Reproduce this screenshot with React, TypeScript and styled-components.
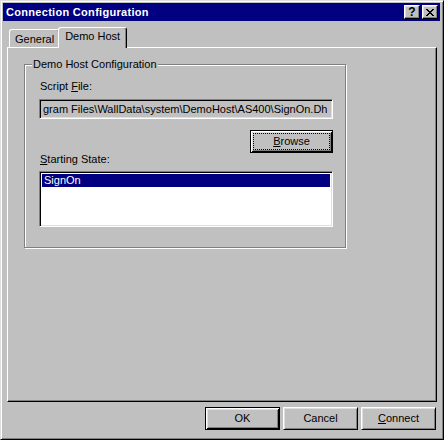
import styled, { createGlobalStyle } from "styled-components"

const GlobalStyle = createGlobalStyle`
  html, body {
    margin: 0;
    padding: 0;
    background: #c0c0c0;
  }
  * {
    box-sizing: border-box;
  }
`

const Window = styled.div`
  width: 444px;
  height: 440px;
  display: flex;
  flex-direction: column;
  background: #c0c0c0;
  border: 1px solid;
  border-color: #dfdfdf #000 #000 #dfdfdf;
  box-shadow: inset 1px 1px #fff, inset -1px -1px #808080;
  padding: 2px 3px 2px 2px;
  font-family: "Liberation Sans", Arial, sans-serif;
  font-size: 11px;
  color: #000;
`

const TitleBar = styled.div`
  height: 18px;
  display: flex;
  align-items: center;
  background: #000080;
  color: #fff;
  padding: 0 2px 0 3px;
`

const Title = styled.div`
  flex: 1;
  font-weight: bold;
  font-size: 11px;
  letter-spacing: 0.3px;
`

const TitleButtons = styled.div`
  display: flex;
  gap: 2px;
`

const TitleButton = styled.div`
  width: 16px;
  height: 14px;
  display: flex;
  align-items: center;
  justify-content: center;
  background: #c0c0c0;
  color: #000;
  font-weight: bold;
  font-size: 12px;
  border: 1px solid;
  border-color: #fff #000 #000 #fff;
  box-shadow: inset -1px -1px #808080, inset 1px 1px #dfdfdf;
`

const Body = styled.div`
  flex: 1;
  display: flex;
  flex-direction: column;
  padding: 6px 0 7px 4px;
`

const TabStrip = styled.div`
  height: 20px;
  display: flex;
  align-items: flex-end;
  padding-left: 2px;
`

const Tab = styled.div<{ $active?: boolean }>`
  position: relative;
  height: ${(p) => (p.$active ? "21px" : "18px")};
  margin: ${(p) => (p.$active ? "0 -2px -1px -2px" : "0")};
  z-index: ${(p) => (p.$active ? 1 : 0)};
  padding: ${(p) => (p.$active ? "2px 6px 0 6px" : "3px 5px 0 5px")};
  background: #c0c0c0;
  border: 1px solid;
  border-bottom: none;
  border-color: #fff #000 #000 #fff;
  border-radius: 3px 3px 0 0;
  box-shadow: inset -1px 0 #808080;
  line-height: 13px;
  white-space: nowrap;
`

const Panel = styled.div`
  flex: 1;
  margin-right: 3px;
  border: 1px solid;
  border-color: #fff #000 #000 #fff;
  box-shadow: inset -1px -1px #808080;
  padding: 16px 0 0 16px;
`

const GroupBox = styled.div`
  position: relative;
  width: 322px;
  height: 184px;
  border: 1px solid #808080;
  box-shadow: inset 1px 1px #fff, 1px 1px #fff;
  padding: 15px 12px 0 14px;
  display: flex;
  flex-direction: column;
`

const Legend = styled.span`
  position: absolute;
  top: -7px;
  left: 7px;
  padding: 0 1px;
  background: #c0c0c0;
  line-height: 13px;
`

const Label = styled.div`
  line-height: 13px;
  padding-left: 1px;
`

const TextField = styled.div`
  height: 20px;
  margin-top: 6px;
  border: 1px solid;
  border-color: #808080 #fff #fff #808080;
  box-shadow: inset 1px 1px #000, inset -1px -1px #dfdfdf;
  padding: 3px 0 0 3px;
  line-height: 13px;
  white-space: nowrap;
  overflow: hidden;
`

const ButtonRow = styled.div<{ $gap?: number }>`
  display: flex;
  justify-content: flex-end;
  gap: ${(p) => p.$gap ?? 0}px;
`

const Button = styled.div<{ $default?: boolean; $width?: number }>`
  width: ${(p) => p.$width ?? 75}px;
  height: 23px;
  display: flex;
  align-items: center;
  justify-content: center;
  background: #c0c0c0;
  border: 1px solid;
  border-color: ${(p) => (p.$default ? "#000" : "#fff #000 #000 #fff")};
  box-shadow: ${(p) =>
    p.$default
      ? "inset 1px 1px #fff, inset -1px -1px #000, inset 2px 2px #dfdfdf, inset -2px -2px #808080"
      : "inset 1px 1px #dfdfdf, inset -1px -1px #808080"};
  line-height: 13px;
`

const FocusRing = styled.span`
  flex: 1;
  align-self: stretch;
  margin: 3px;
  outline: 1px dotted #000;
  display: flex;
  align-items: center;
  justify-content: center;
`

const BrowseRow = styled(ButtonRow)`
  margin-top: 11px;
`

const ListBox = styled.div`
  height: 56px;
  margin-top: 5px;
  background: #fff;
  border: 1px solid;
  border-color: #808080 #fff #fff #808080;
  box-shadow: inset 1px 1px #000, inset -1px -1px #dfdfdf;
  padding: 2px 2px 0 2px;
`

const ListItem = styled.div<{ $selected?: boolean }>`
  height: 13px;
  line-height: 13px;
  padding-left: 2px;
  background: ${(p) => (p.$selected ? "#000080" : "transparent")};
  color: ${(p) => (p.$selected ? "#fff" : "#000")};
`

const Footer = styled(ButtonRow)`
  margin-top: 5px;
  padding-right: 4px;
`

const U = styled.u`
  text-decoration-thickness: 1px;
  text-underline-offset: 1px;
`

function CloseGlyph() {
  return (
    <svg width="8" height="7" viewBox="0 0 8 7" shapeRendering="crispEdges">
      <path
        fill="#000"
        d="M0 0h2v1h-2zM6 0h2v1h-2zM1 1h2v1h-2zM5 1h2v1h-2zM2 2h4v1h-4zM3 3h2v1h-2zM2 4h4v1h-4zM1 5h2v1h-2zM5 5h2v1h-2zM0 6h2v1h-2zM6 6h2v1h-2z"
      />
    </svg>
  )
}

export default function App() {
  return (
    <>
      <GlobalStyle />
      <Window>
        <TitleBar>
          <Title>Connection Configuration</Title>
          <TitleButtons>
            <TitleButton>?</TitleButton>
            <TitleButton>
              <CloseGlyph />
            </TitleButton>
          </TitleButtons>
        </TitleBar>
        <Body>
          <TabStrip>
            <Tab>General</Tab>
            <Tab $active>Demo Host</Tab>
          </TabStrip>
          <Panel>
            <GroupBox>
              <Legend>Demo Host Configuration</Legend>
              <Label>
                Script <U>F</U>ile:
              </Label>
              <TextField>{"gram Files\\WallData\\system\\DemoHost\\AS400\\SignOn.Dh"}</TextField>
              <BrowseRow>
                <Button $default $width={83}>
                  <FocusRing>
                    <span>
                      <U>B</U>rowse
                    </span>
                  </FocusRing>
                </Button>
              </BrowseRow>
              <Label>
                <U>S</U>tarting State:
              </Label>
              <ListBox>
                <ListItem $selected>SignOn</ListItem>
              </ListBox>
            </GroupBox>
          </Panel>
          <Footer $gap={3}>
            <Button $default>OK</Button>
            <Button>Cancel</Button>
            <Button>
              <span>
                <U>C</U>onnect
              </span>
            </Button>
          </Footer>
        </Body>
      </Window>
    </>
  )
}
